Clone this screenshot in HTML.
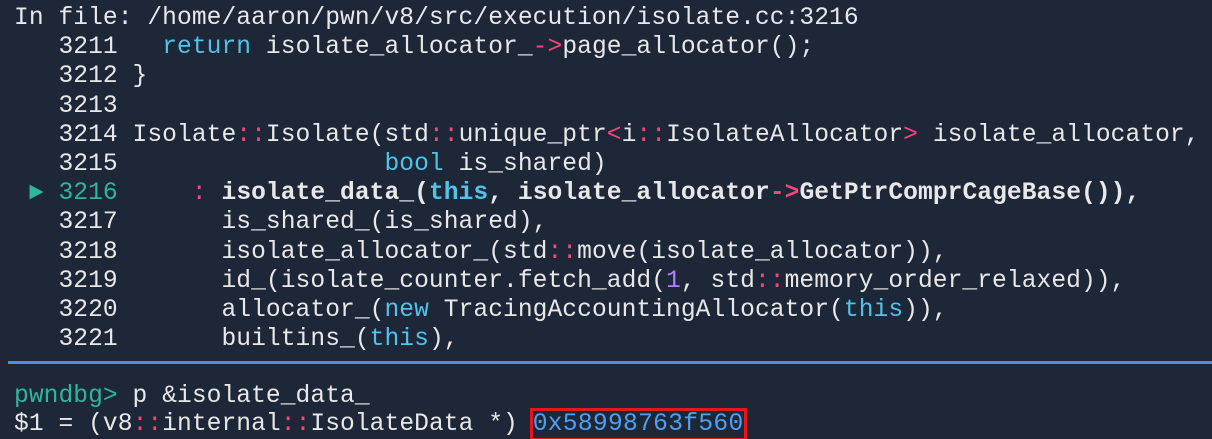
<!DOCTYPE html>
<html><head><meta charset="utf-8"><style>
html,body{margin:0;padding:0;background:#1e2738;width:1212px;height:438px;overflow:hidden}
pre{margin:0;position:absolute;left:14px;font-family:"Liberation Mono",monospace;font-size:24.6px;letter-spacing:0.06px;line-height:29.2px;color:#e8e8e8;white-space:pre}
.k{color:#4fc3ea}.p{color:#f7457a}.n{color:#ae81ff}.g{color:#2fb59c}.b{font-weight:bold}.a{color:#4f9ff0}
.box{outline:3px solid #e8151b;outline-offset:0px}
#line{position:absolute;left:8px;right:0;top:361px;height:3px;background:#4a90e2}
</style></head><body>
<pre style="top:4px">In file: /home/aaron/pwn/v8/src/execution/isolate.cc:3216
   3211   <span class="k">return</span> isolate_allocator_<span class="p">-&gt;</span>page_allocator();
   3212 }
   3213 
   3214 Isolate<span class="p">::</span>Isolate(std<span class="p">::</span>unique_ptr<span class="p">&lt;</span>i<span class="p">::</span>IsolateAllocator<span class="p">&gt;</span> isolate_allocator,
   3215                  <span class="k">bool</span> is_shared)
 <span class="g">► 3216</span>     <span class="p">:</span> <span class="b">isolate_data_(<span class="k">this</span>, isolate_allocator<span class="p">-&gt;</span>GetPtrComprCageBase()),</span>
   3217       is_shared_(is_shared),
   3218       isolate_allocator_(std<span class="p">::</span>move(isolate_allocator)),
   3219       id_(isolate_counter.fetch_add(<span class="n">1</span>, std<span class="p">::</span>memory_order_relaxed)),
   3220       allocator_(<span class="k">new</span> TracingAccountingAllocator(<span class="k">this</span>)),
   3221       builtins_(<span class="k">this</span>),</pre>
<div id="line"></div>
<pre style="top:383px;line-height:28px"><span class="g">pwndbg&gt;</span> p &amp;isolate_data_
$1 = (v8<span class="p">::</span>internal<span class="p">::</span>IsolateData *) <span class="a box" style="letter-spacing:0.3px">0x58998763f560</span></pre>
</body></html>
